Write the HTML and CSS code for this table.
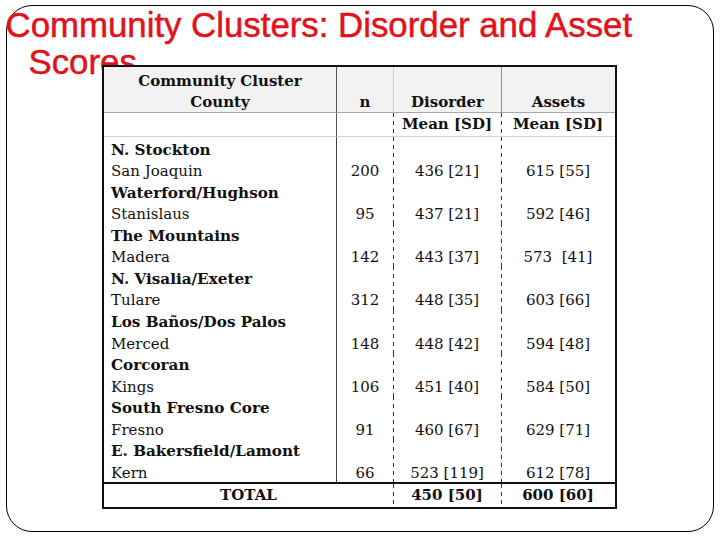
FILE: index.html
```html
<!DOCTYPE html>
<html>
<head>
<meta charset="utf-8">
<link rel="stylesheet" href="styles.css">
</head>
<body>
<div class="slide">
  <h1 class="title">Community Clusters: Disorder and Asset Scores</h1>
  <div class="grid">
    <div class="cell h c1">Community Cluster<br>County</div>
    <div class="cell h hn"><span>n</span></div>
    <div class="cell h hd"><span>Disorder</span></div>
    <div class="cell h ha"><span>Assets</span></div>

    <div class="cell s"></div>
    <div class="cell s sn"></div>
    <div class="cell s dash">Mean [SD]</div>
    <div class="cell s dash">Mean [SD]</div>

    <div class="cell r name"><b>N. Stockton</b><br>San Joaquin</div>
    <div class="cell r num nn">200</div>
    <div class="cell r num dash">436 [21]</div>
    <div class="cell r num dash">615 [55]</div>

    <div class="cell r name"><b>Waterford/Hughson</b><br>Stanislaus</div>
    <div class="cell r num nn">95</div>
    <div class="cell r num dash">437 [21]</div>
    <div class="cell r num dash">592 [46]</div>

    <div class="cell r name"><b>The Mountains</b><br>Madera</div>
    <div class="cell r num nn">142</div>
    <div class="cell r num dash">443 [37]</div>
    <div class="cell r num dash">573&nbsp; [41]</div>

    <div class="cell r name"><b>N. Visalia/Exeter</b><br>Tulare</div>
    <div class="cell r num nn">312</div>
    <div class="cell r num dash">448 [35]</div>
    <div class="cell r num dash">603 [66]</div>

    <div class="cell r name"><b>Los Baños/Dos Palos</b><br>Merced</div>
    <div class="cell r num nn">148</div>
    <div class="cell r num dash">448 [42]</div>
    <div class="cell r num dash">594 [48]</div>

    <div class="cell r name"><b>Corcoran</b><br>Kings</div>
    <div class="cell r num nn">106</div>
    <div class="cell r num dash">451 [40]</div>
    <div class="cell r num dash">584 [50]</div>

    <div class="cell r name"><b>South Fresno Core</b><br>Fresno</div>
    <div class="cell r num nn">91</div>
    <div class="cell r num dash">460 [67]</div>
    <div class="cell r num dash">629 [71]</div>

    <div class="cell r name"><b>E. Bakersfield/Lamont</b><br>Kern</div>
    <div class="cell r num nn">66</div>
    <div class="cell r num dash">523 [119]</div>
    <div class="cell r num dash">612 [78]</div>

    <div class="cell t tl">TOTAL</div>
    <div class="cell t dash">450 [50]</div>
    <div class="cell t dash">600 [60]</div>
  </div>
</div>
</body>
</html>
```
FILE: styles.css
```css
html, body {
  margin: 0;
  padding: 0;
  background: #fff;
}

.slide {
  margin: 5px 0 0 6px;
  width: 708px;
  height: 527px;
  box-sizing: border-box;
  border: 1px solid #000;
  border-radius: 26px;
}

.title {
  margin: 0;
  padding-left: 21.5px;
  text-indent: -23px;
  font-family: "Liberation Sans", Arial, sans-serif;
  font-weight: normal;
  font-size: 34.8px;
  line-height: 37px;
  color: #e2121c;
  -webkit-text-stroke: 0.5px #e2121c;
}

.grid {
  position: relative;
  margin: -15px 0 0 95px;
  width: 515px;
  box-sizing: border-box;
  border: 2px solid #111;
  background: #fff;
  display: grid;
  grid-template-columns: 232px 57px 108px 114px;
  font-family: "DejaVu Serif", serif;
  font-size: 15px;
  color: #111;
}

.cell {
  box-sizing: border-box;
  white-space: nowrap;
}

.cell b {
  font-size: 15.2px;
}

/* header row */
.h {
  height: 46px;
  background: #f2f2f2;
  border-bottom: 1px solid #a8a8a8;
  font-weight: bold;
}
.c1 {
  padding-top: 4px;
  line-height: 21px;
  text-align: center;
}
.hn, .hd, .ha {
  display: flex;
  align-items: flex-end;
  justify-content: center;
  line-height: 19px;
}
.hn { border-left: 1px solid #555; }
.hd { border-left: 1px solid #cfcfcf; }
.ha { border-left: 1px solid #8c8c8c; }

/* sub header */
.s {
  height: 24px;
  border-bottom: 1px solid #d4d4d4;
  line-height: 23px;
  text-align: center;
  font-weight: bold;
}
.sn { border-left: 1px solid #555; }

.dash {
  background-image: linear-gradient(to bottom, #333 0, #333 4px, transparent 4px, transparent 8px);
  background-size: 1px 8px;
  background-repeat: repeat-y;
  background-position: 0 0;
}

/* body rows */
.r {
  height: 43.125px;
  padding-top: 2.5px;
  line-height: 21.56px;
}
.name {
  padding-left: 7px;
}
.num {
  padding-top: 24px;
  text-align: center;
}
.nn { border-left: 1px solid #444; }

/* total */
.t {
  height: 25px;
  border-top: 2px solid #111;
  line-height: 23px;
  text-align: center;
  font-weight: bold;
}
.tl {
  grid-column: span 2;
}
```
